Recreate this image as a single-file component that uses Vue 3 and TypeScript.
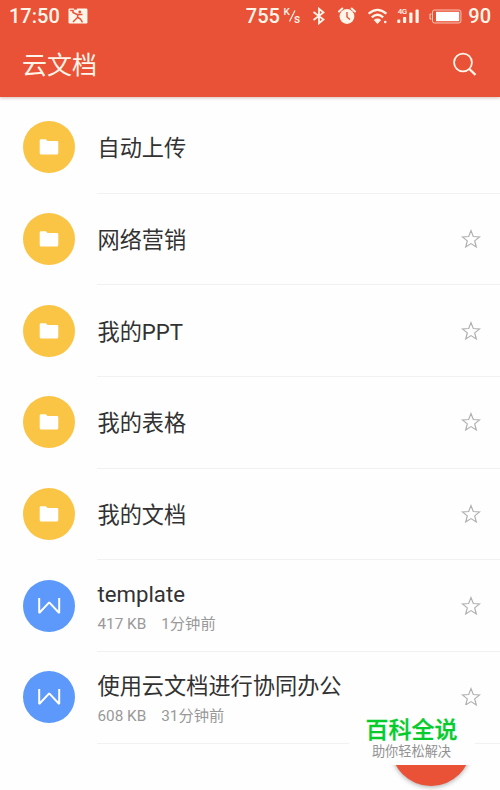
<script setup lang="ts">
interface CloudItem {
  name: string
  kind: 'folder' | 'doc'
  size?: string
  time?: string
  starred: boolean
}

const items: CloudItem[] = [
  { name: '自动上传', kind: 'folder', starred: false },
  { name: '网络营销', kind: 'folder', starred: true },
  { name: '我的PPT', kind: 'folder', starred: true },
  { name: '我的表格', kind: 'folder', starred: true },
  { name: '我的文档', kind: 'folder', starred: true },
  { name: 'template', kind: 'doc', size: '417 KB', time: '1分钟前', starred: true },
  { name: '使用云文档进行协同办公', kind: 'doc', size: '608 KB', time: '31分钟前', starred: true },
]
</script>

<template>
  <div class="screen">
    <header class="header">
      <div class="status">
        <span class="clock">17:50</span>
        <svg class="gallery" width="20" height="16" viewBox="0 0 20 16">
          <rect x="0.5" y="0.5" width="19" height="15" rx="1.2" fill="#fff5e9" />
          <path d="M2.2 2.5H5V4.5L9 6.5H14.5M10 6.5L9.5 9.5 5 14M10 9.5L12.5 11 14.5 14.5" fill="none" stroke="#e95237" stroke-width="1.5" />
          <circle cx="11.8" cy="4" r="1.4" fill="#e95237" />
          <path d="M6 0h3v1.6H6z" fill="#e95237" />
        </svg>
        <span class="rate">755</span>
        <svg class="unit" width="19" height="18" viewBox="0 0 19 18">
          <text x="0.5" y="8" class="unit-text">K</text>
          <path d="M6.5 14.5L12 3.5" stroke="#fff5e9" stroke-width="1.2" />
          <text x="11" y="16" class="unit-text unit-second">s</text>
        </svg>
        <svg class="bluetooth" width="14" height="18" viewBox="0 0 14 18">
          <path d="M1.5 5L11.5 12.5 7 16.3V1.7L11.5 5.5 1.5 13" fill="none" stroke="#fff5e9" stroke-width="1.8" />
        </svg>
        <svg class="alarm" width="18" height="18" viewBox="0 0 18 18">
          <circle cx="9" cy="9.5" r="7.4" fill="#fff5e9" />
          <path d="M1 4.5L4.3 1.5M17 4.5L13.7 1.5" stroke="#fff5e9" stroke-width="2" stroke-linecap="round" />
          <path d="M9 5V10L12 12.5" fill="none" stroke="#e95237" stroke-width="1.4" />
        </svg>
        <svg class="wifi" width="20" height="16" viewBox="0 0 20 16">
          <g fill="none" stroke="#fff5e9" stroke-width="2.3">
            <path d="M0.6 5.7Q9.5 -2 18.4 5.7" />
            <path d="M3.8 9.4Q9.5 4.2 15.2 9.4" />
          </g>
          <path d="M5.8 12Q9.5 9 13.2 12L9.5 16z" fill="#fff5e9" />
          <circle cx="17.3" cy="14" r="1.3" fill="#fff5e9" />
        </svg>
        <svg class="signal" width="23" height="18" viewBox="0 0 23 18">
          <text x="0.8" y="7.5" class="net-text">4G</text>
          <g fill="#fff5e9">
            <rect x="0.3" y="12.5" width="3" height="3.5" rx="1" />
            <rect x="6" y="10" width="3.2" height="6" rx="1" />
            <rect x="12.3" y="5.5" width="3.2" height="10.5" rx="1" />
            <rect x="18.6" y="2.5" width="3.2" height="13.5" rx="1" />
          </g>
        </svg>
        <svg class="battery" width="33" height="15" viewBox="0 0 33 15">
          <path d="M2.5 5H1V10H2.5" fill="none" stroke="#fff5e9" stroke-opacity=".8" />
          <rect x="3.5" y="1" width="28.5" height="13" rx="2" fill="none" stroke="#fff5e9" stroke-opacity=".7" stroke-width="1" />
          <rect x="7" y="2.8" width="23.3" height="9.4" fill="#fff" />
        </svg>
        <span class="percent">90</span>
      </div>
      <div class="toolbar">
        <h1>云文档</h1>
        <svg width="26" height="26" viewBox="0 0 26 26">
          <circle cx="11" cy="10.5" r="8.9" fill="none" stroke="#fff5e9" stroke-width="1.8" />
          <path d="M17.3 17L23.5 22.8" stroke="#fff5e9" stroke-width="2.3" />
        </svg>
      </div>
    </header>

    <main class="list">
      <div v-for="item in items" :key="item.name" class="row">
        <div class="badge" :class="item.kind">
          <svg v-if="item.kind === 'folder'" width="20" height="18" viewBox="0 0 20 18">
            <path d="M2 1.2H6.8L8.6 3H18Q19.3 3 19.3 4.3V15Q19.3 16.5 17.8 16.5H2.2Q.7 16.5 .7 15V2.5Q.7 1.2 2 1.2z" fill="#fff" />
          </svg>
          <svg v-else width="24" height="20" viewBox="0 0 24 20">
            <path d="M2.2 2V17L12.2 6.4 22.2 17V2" fill="none" stroke="#fff" stroke-width="2" stroke-linejoin="bevel" />
          </svg>
        </div>
        <div class="body">
          <div class="info">
            <div class="name">{{ item.name }}</div>
            <div v-if="item.size" class="meta">
              <span class="size">{{ item.size }}</span><span>{{ item.time }}</span>
            </div>
          </div>
          <svg v-if="item.starred" class="star" width="20" height="20" viewBox="0 0 20 20">
            <path d="M10 1.6L12.3 7.5 18.6 7.9 13.7 11.9 15.3 18 10 14.6 4.7 18 6.3 11.9 1.4 7.9 7.7 7.5z" fill="none" stroke="#b0b0b0" stroke-width="1.2" />
          </svg>
        </div>
      </div>
    </main>

    <div class="fab"></div>
    <div class="watermark">
      <div class="brand">百科全说</div>
      <div class="slogan">助你轻松解决</div>
    </div>
  </div>
</template>

<style>
body {
  margin: 0;
  background: #fefefe;
}
</style>

<style scoped>
.screen {
  position: relative;
  width: 500px;
  height: 790px;
  overflow: hidden;
  background: #fefefe;
  font-family: Roboto, "Noto Sans CJK SC", sans-serif;
}
.header {
  height: 97px;
  background: #e95237;
  color: #fff5e9;
  box-shadow: 0 1px 3px rgba(120, 40, 20, 0.3);
}
.status {
  display: flex;
  align-items: center;
  height: 32px;
  padding: 0 9px;
  font-size: 20px;
  font-weight: 500;
  line-height: 32px;
}
.clock {
  width: 59px;
}
.gallery {
  margin-right: 158px;
}
.rate {
  width: 37px;
}
.unit-text {
  font-size: 10px;
  font-weight: 500;
  fill: #fff5e9;
}
.unit-second {
  font-size: 12px;
}
.net-text {
  font-size: 8px;
  font-weight: 500;
  letter-spacing: -0.5px;
  fill: #fff5e9;
}
.bluetooth {
  margin-left: 10px;
}
.alarm {
  margin-left: 12px;
}
.wifi {
  margin-left: 12px;
}
.signal {
  margin-left: 10px;
}
.battery {
  margin-left: 9px;
}
.percent {
  margin-left: 6px;
}
.toolbar {
  display: flex;
  align-items: center;
  justify-content: space-between;
  height: 65px;
  padding: 0 22px;
}
h1 {
  margin: 0;
  padding-top: 2px;
  font-size: 25px;
  font-weight: 400;
  line-height: 36px;
}
.list {
  padding-top: 5px;
}
.row {
  display: flex;
  align-items: center;
  height: 91.7px;
  padding-left: 23px;
}
.badge {
  display: flex;
  align-items: center;
  justify-content: center;
  flex: none;
  width: 52px;
  height: 52px;
  margin: 0 22px 1px 0;
  border-radius: 50%;
}
.folder {
  background: #fac444;
}
.doc {
  background: #5c99fa;
}
.body {
  box-sizing: border-box;
  display: flex;
  align-items: center;
  justify-content: space-between;
  flex: 1;
  height: 100%;
  padding-right: 19px;
  border-bottom: 1px solid #f1f1f1;
}
.info {
  padding: 2px 0 0 0.5px;
}
.name {
  color: #323232;
  font-size: 22.2px;
  line-height: 32px;
}
.meta {
  display: flex;
  gap: 15px;
  margin-top: 3px;
  color: #999;
  font-size: 15.3px;
  line-height: 22px;
}
.fab {
  position: absolute;
  left: 391px;
  top: 706px;
  width: 80px;
  height: 80px;
  border-radius: 50%;
  background: #e95237;
  box-shadow: 0 1px 5px rgba(0, 0, 0, 0.35);
  clip-path: inset(59px -8px -8px -8px);
}
.watermark {
  position: absolute;
  left: 349px;
  top: 705px;
  box-sizing: border-box;
  width: 126px;
  height: 60px;
  padding: 10px 1px 0 0;
  background: #fefefe;
  text-align: center;
}
.brand {
  color: #05cc2c;
  font-size: 23px;
  font-weight: 500;
  line-height: 31px;
  -webkit-text-stroke: 0.3px #05cc2c;
}
.slogan {
  color: #929292;
  font-size: 13.2px;
  line-height: 12px;
}
</style>
